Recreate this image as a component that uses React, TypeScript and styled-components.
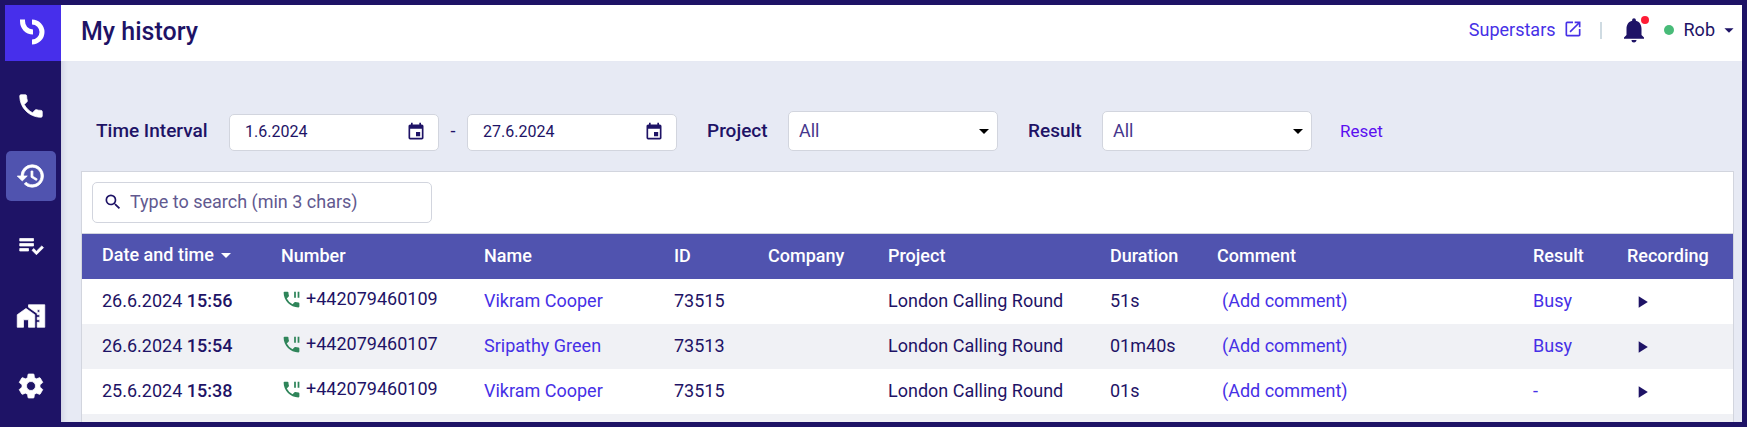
import React from "react";
import styled, { createGlobalStyle } from "styled-components";
import {
  MdArrowDropDown,
  MdEvent,
  MdHistory,
  MdHomeWork,
  MdNotifications,
  MdOpenInNew,
  MdPhone,
  MdPhonePaused,
  MdPlayArrow,
  MdPlaylistAddCheck,
  MdSearch,
  MdSettings,
} from "react-icons/md";

const color = {
  navy: "#1e1366",
  brand: "#472feb",
  accent: "#5053af",
  link: "#4630e6",
  reset: "#5b0ff0",
  page: "#e7eaf4",
  line: "#d2d5de",
  stripe: "#f0f1f5",
  green: "#2f855a",
};

const GlobalStyle = createGlobalStyle`
  *, *::before, *::after { box-sizing: border-box; }
  body {
    margin: 0;
    background: ${color.navy};
    color: ${color.navy};
    font: 400 18px/24px Roboto, "Liberation Sans", sans-serif;
  }
  button, input, select { font: inherit; color: inherit; }
  button { padding: 0; border: 0; background: none; cursor: pointer; }
  a { color: ${color.link}; text-decoration: none; }
  svg { display: block; flex: none; }
`;

const Shell = styled.div`
  display: flex;
  min-height: 100vh;
  border: 5px solid ${color.navy};
`;

const Sidebar = styled.nav`
  flex: none;
  width: 56px;
  background: ${color.navy};
  color: #fff;
`;

const Logo = styled.a`
  display: flex;
  align-items: center;
  justify-content: center;
  height: 56px;
  padding: 0 2px 3px 0;
  background: ${color.brand};
`;

const NavList = styled.div`
  display: flex;
  flex-direction: column;
  gap: 20px;
  padding: 20px 5px 0 1px;
`;

const NavItem = styled.a<{ $active?: boolean }>`
  display: flex;
  align-items: center;
  justify-content: center;
  height: 50px;
  border-radius: 5px;
  color: #fff;
  font-size: 30px;
  background: ${(p) => (p.$active ? color.accent : "transparent")};

  path { stroke: #fff; stroke-width: 0.6px; }
  path[fill="none"] { stroke: none; }
`;

const Main = styled.div`
  display: flex;
  flex: 1;
  flex-direction: column;
  min-width: 0;
  background: ${color.page};
`;

const Header = styled.header`
  display: flex;
  align-items: center;
  justify-content: space-between;
  height: 56px;
  padding: 0 2px 6px 20px;
  background: #fff;
`;

const Title = styled.h1`
  margin: 0;
  padding-top: 4px;
  font-size: 25px;
  font-weight: 500;
  line-height: 32px;
`;

const HeaderTools = styled.div`
  display: flex;
  align-items: center;
`;

const AccountLink = styled.a`
  display: flex;
  align-items: center;
  gap: 7px;

  svg { margin-bottom: 2px; }
`;

const Divider = styled.span`
  width: 2px;
  height: 17px;
  margin: 0 17px;
  background: #cfdbe2;
`;

const BellButton = styled.button`
  position: relative;
  font-size: 30px;
`;

const BellDot = styled.span`
  position: absolute;
  top: 1px;
  right: 0;
  width: 8px;
  height: 8px;
  border-radius: 50%;
  background: #ff1c36;
`;

const UserButton = styled.button`
  display: flex;
  align-items: center;
  margin-left: 15px;

  svg { margin-left: 3px; }
`;

const StatusDot = styled.span`
  width: 10px;
  height: 10px;
  margin-right: 10px;
  border-radius: 50%;
  background: #48bb78;
`;

const Content = styled.main`
  display: flex;
  flex: 1;
  flex-direction: column;
  padding: 50px 8px 0 20px;
  box-shadow: inset 6px 0 6px -5px rgba(30, 19, 102, 0.15);
`;

const Filters = styled.form`
  display: flex;
  align-items: flex-end;
  margin-bottom: 20px;
  padding-left: 15px;
`;

const FilterLabel = styled.label<{ $width: number }>`
  width: ${(p) => p.$width}px;
  font-size: 19px;
  font-weight: 500;
  line-height: 40px;
`;

const DateRange = styled.div`
  display: flex;
  margin-right: 30px;
`;

const DateField = styled.div`
  display: flex;
  align-items: center;
  width: 210px;
  height: 37px;
  padding: 0 12px 2px 15px;
  border: 1px solid ${color.line};
  border-radius: 5px;
  background: #fff;
`;

const DateInput = styled.input`
  flex: 1;
  min-width: 0;
  padding: 0;
  border: 0;
  outline: 0;
  background: none;
  font-size: 16px;
`;

const CalendarButton = styled.button`
  font-size: 20px;
`;

const Dash = styled.span`
  width: 28px;
  line-height: 34px;
  text-align: center;
`;

const SelectBox = styled.div`
  display: grid;
  align-items: center;
  width: 210px;
  margin-right: 30px;

  > * { grid-area: 1 / 1; }
  > svg {
    justify-self: end;
    margin-right: 2px;
    color: #000;
    font-size: 24px;
    pointer-events: none;
  }
`;

const Select = styled.select`
  width: 100%;
  height: 40px;
  padding: 0 30px 1px 10px;
  border: 1px solid ${color.line};
  border-radius: 5px;
  appearance: none;
  background: #fff;
  color: #46378c;
`;

const ResetButton = styled.button`
  margin-left: -2px;
  color: ${color.reset};
  font-size: 17px;
  line-height: 40px;
`;

const Panel = styled.section`
  flex: 1;
  border: 1px solid ${color.line};
  border-bottom: 0;
  background: ${color.stripe};
`;

const SearchBar = styled.div`
  padding: 10px;
  border-bottom: 1px solid ${color.line};
  background: #fff;
`;

const SearchField = styled.label`
  display: flex;
  align-items: center;
  gap: 7px;
  width: 340px;
  height: 41px;
  padding: 0 10px 2px;
  border: 1px solid ${color.line};
  border-radius: 5px;

  svg { font-size: 20px; }
`;

const SearchInput = styled.input`
  flex: 1;
  min-width: 0;
  padding: 0;
  border: 0;
  outline: 0;
  background: none;

  &::placeholder { color: #62598f; opacity: 1; }
`;

const Table = styled.table`
  width: 100%;
  border-collapse: collapse;
  table-layout: fixed;

  tbody tr { background: #fff; }
  tbody tr:nth-child(even) { background: ${color.stripe}; }
`;

const Th = styled.th<{ $width?: number }>`
  width: ${(p) => (p.$width ? `${p.$width}px` : "auto")};
  height: 45px;
  padding: 0 0 2px 20px;
  background: ${color.accent};
  color: #fff;
  font-weight: 500;
  text-align: left;
  white-space: nowrap;
`;

const SortButton = styled.button`
  display: flex;
  align-items: center;
  padding-bottom: 1px;
  font-weight: 500;
`;

const Td = styled.td`
  height: 45px;
  padding: 0 0 2px 20px;
  white-space: nowrap;
`;

const Time = styled.strong`
  font-weight: 500;
`;

const Phone = styled.span`
  display: flex;
  align-items: center;
  gap: 4px;
  padding-bottom: 3px;

  svg { color: ${color.green}; font-size: 21px; }
`;

const CommentButton = styled.button`
  padding-left: 5px;
  color: ${color.link};
`;

const PlayButton = styled.button`
  display: block;
  margin: 2px 0 0 5px;
  font-size: 20px;
`;

const columns: { label: string; width?: number }[] = [
  { label: "Date and time", width: 179 },
  { label: "Number", width: 203 },
  { label: "Name", width: 190 },
  { label: "ID", width: 94 },
  { label: "Company", width: 120 },
  { label: "Project", width: 222 },
  { label: "Duration", width: 107 },
  { label: "Comment" },
  { label: "Result", width: 94 },
  { label: "Recording", width: 126 },
];

const calls = [
  { date: "26.6.2024", time: "15:56", number: "+442079460109", name: "Vikram Cooper", id: "73515", duration: "51s", result: "Busy" },
  { date: "26.6.2024", time: "15:54", number: "+442079460107", name: "Sripathy Green", id: "73513", duration: "01m40s", result: "Busy" },
  { date: "25.6.2024", time: "15:38", number: "+442079460109", name: "Vikram Cooper", id: "73515", duration: "01s", result: "-" },
];

const navItems = [
  { label: "Calls", icon: <MdPhone /> },
  { label: "History", icon: <MdHistory />, active: true },
  { label: "Tasks", icon: <MdPlaylistAddCheck /> },
  { label: "Workspace", icon: <MdHomeWork /> },
  { label: "Settings", icon: <MdSettings /> },
];

const LogoMark = () => (
  <svg width="26" height="26" viewBox="0 0 26 26" fill="none" stroke="#fff" strokeWidth="5">
    <path d="M3.5 0.5V2C3.5 8 7.5 13 14 13" />
    <path d="M13 3A10 10 0 0 1 13 23" />
  </svg>
);

export default function App() {
  return (
    <>
      <GlobalStyle />
      <Shell>
        <Sidebar aria-label="Main">
          <Logo href="#" aria-label="Home">
            <LogoMark />
          </Logo>
          <NavList>
            {navItems.map((item) => (
              <NavItem key={item.label} href="#" aria-label={item.label} $active={item.active}>
                {item.icon}
              </NavItem>
            ))}
          </NavList>
        </Sidebar>
        <Main>
          <Header>
            <Title>My history</Title>
            <HeaderTools>
              <AccountLink href="#">
                Superstars
                <MdOpenInNew size={20} />
              </AccountLink>
              <Divider />
              <BellButton aria-label="Notifications">
                <MdNotifications />
                <BellDot />
              </BellButton>
              <UserButton>
                <StatusDot />
                Rob
                <MdArrowDropDown size={22} />
              </UserButton>
            </HeaderTools>
          </Header>
          <Content>
            <Filters onSubmit={(e) => e.preventDefault()}>
              <FilterLabel htmlFor="from" $width={133}>Time Interval</FilterLabel>
              <DateRange>
                <DateField>
                  <DateInput id="from" defaultValue="1.6.2024" />
                  <CalendarButton type="button" aria-label="Pick start date"><MdEvent /></CalendarButton>
                </DateField>
                <Dash>-</Dash>
                <DateField>
                  <DateInput aria-label="End date" defaultValue="27.6.2024" />
                  <CalendarButton type="button" aria-label="Pick end date"><MdEvent /></CalendarButton>
                </DateField>
              </DateRange>
              <FilterLabel htmlFor="project" $width={81}>Project</FilterLabel>
              <SelectBox>
                <Select id="project"><option>All</option></Select>
                <MdArrowDropDown />
              </SelectBox>
              <FilterLabel htmlFor="result" $width={74}>Result</FilterLabel>
              <SelectBox>
                <Select id="result"><option>All</option></Select>
                <MdArrowDropDown />
              </SelectBox>
              <ResetButton type="reset">Reset</ResetButton>
            </Filters>
            <Panel>
              <SearchBar>
                <SearchField>
                  <MdSearch />
                  <SearchInput type="text" aria-label="Search" placeholder="Type to search (min 3 chars)" />
                </SearchField>
              </SearchBar>
              <Table>
                <thead>
                  <tr>
                    {columns.map((c, i) => (
                      <Th key={c.label} $width={c.width} scope="col">
                        {i === 0 ? (
                          <SortButton>
                            {c.label}
                            <MdArrowDropDown size={24} />
                          </SortButton>
                        ) : (
                          c.label
                        )}
                      </Th>
                    ))}
                  </tr>
                </thead>
                <tbody>
                  {calls.map((c) => (
                    <tr key={c.time}>
                      <Td>{c.date} <Time>{c.time}</Time></Td>
                      <Td><Phone><MdPhonePaused />{c.number}</Phone></Td>
                      <Td><a href="#">{c.name}</a></Td>
                      <Td>{c.id}</Td>
                      <Td />
                      <Td>London Calling Round</Td>
                      <Td>{c.duration}</Td>
                      <Td><CommentButton>(Add comment)</CommentButton></Td>
                      <Td><a href="#">{c.result}</a></Td>
                      <Td><PlayButton aria-label="Play recording"><MdPlayArrow /></PlayButton></Td>
                    </tr>
                  ))}
                </tbody>
              </Table>
            </Panel>
          </Content>
        </Main>
      </Shell>
    </>
  );
}
